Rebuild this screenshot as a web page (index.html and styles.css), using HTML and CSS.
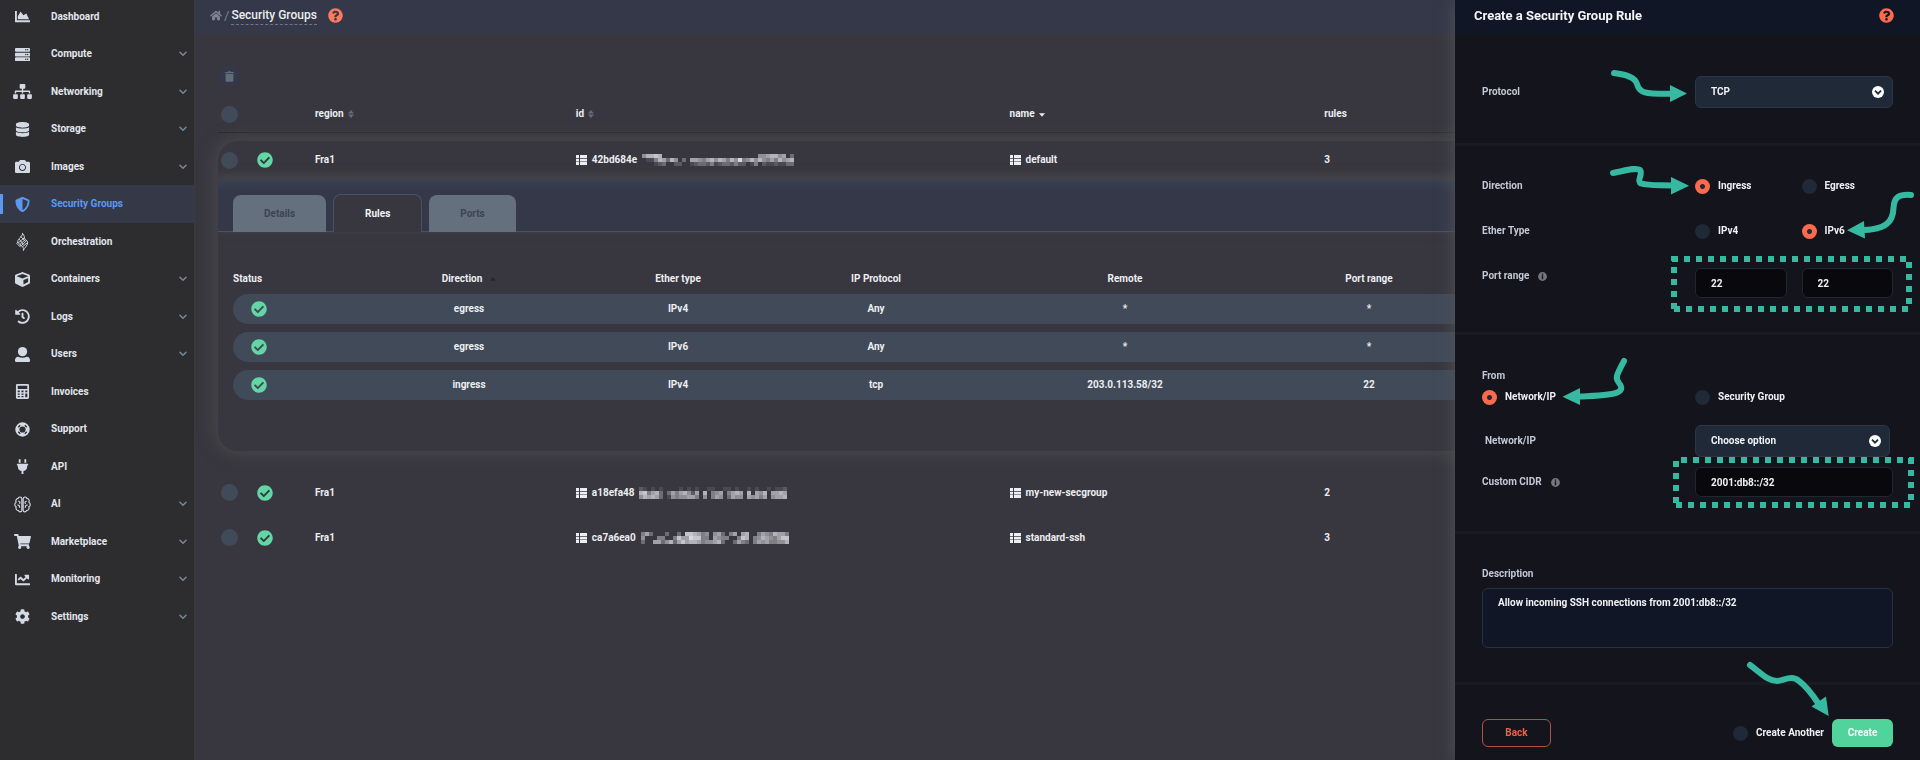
FILE: index.html
```html
<!DOCTYPE html>
<html lang="en">
<head>
<meta charset="utf-8">
<title>Security Groups</title>
<link rel="stylesheet" href="styles.css">
</head>
<body>
<svg class="sprite" aria-hidden="true">
  <symbol id="i-area" viewBox="0 0 512 512"><path d="M500 384c6.600 0 12 5.400 12 12v40c0 6.600-5.400 12-12 12H12c-6.600 0-12-5.400-12-12V76c0-6.600 5.400-12 12-12h40c6.600 0 12 5.400 12 12v308h436zM372.700 159.500L288 216l-85.300-113.700c-5.100-6.800-15.500-6.300-19.900 1L96 248v104h384l-89.900-187.800c-3.200-6.500-11.400-8.700-17.400-4.700z"/></symbol>
  <symbol id="i-server" viewBox="0 0 512 512"><path fill-rule="evenodd" d="M32 32h448a32 32 0 0 1 32 32v64a32 32 0 0 1-32 32H32a32 32 0 0 1-32-32V64a32 32 0 0 1 32-32zM432 72a24 24 0 1 0 0 48 24 24 0 0 0 0-48zM368 72a24 24 0 1 0 0 48 24 24 0 0 0 0-48zM32 192h448a32 32 0 0 1 32 32v64a32 32 0 0 1-32 32H32a32 32 0 0 1-32-32v-64a32 32 0 0 1 32-32zM432 232a24 24 0 1 0 0 48 24 24 0 0 0 0-48zM368 232a24 24 0 1 0 0 48 24 24 0 0 0 0-48zM32 352h448a32 32 0 0 1 32 32v64a32 32 0 0 1-32 32H32a32 32 0 0 1-32-32v-64a32 32 0 0 1 32-32zM432 392a24 24 0 1 0 0 48 24 24 0 0 0 0-48zM368 392a24 24 0 1 0 0 48 24 24 0 0 0 0-48z"/></symbol>
  <symbol id="i-sitemap" viewBox="0 0 640 512"><path d="M128 352H32c-17.670 0-32 14.330-32 32v96c0 17.670 14.330 32 32 32h96c17.670 0 32-14.330 32-32v-96c0-17.670-14.330-32-32-32zm-24-80h192v48h48v-48h192v48h48v-57.590c0-21.170-17.230-38.410-38.410-38.410H344v-64h40c17.670 0 32-14.330 32-32V32c0-17.670-14.330-32-32-32H256c-17.670 0-32 14.330-32 32v96c0 17.670 14.330 32 32 32h40v64H94.410C73.230 224 56 241.230 56 262.410V320h48v-48zm264 80h-96c-17.670 0-32 14.330-32 32v96c0 17.670 14.330 32 32 32h96c17.670 0 32-14.330 32-32v-96c0-17.670-14.330-32-32-32zm240 0h-96c-17.670 0-32 14.330-32 32v96c0 17.670 14.330 32 32 32h96c17.670 0 32-14.330 32-32v-96c0-17.670-14.330-32-32-32z"/></symbol>
  <symbol id="i-database" viewBox="0 0 448 512"><path d="M448 73.143v45.714C448 159.143 347.667 192 224 192S0 159.143 0 118.857V73.143C0 32.857 100.333 0 224 0s224 32.857 224 73.143zM448 176v102.857C448 319.143 347.667 352 224 352S0 319.143 0 278.857V176c48.125 33.143 136.208 48.572 224 48.572S399.874 209.143 448 176zm0 160v102.857C448 479.143 347.667 512 224 512S0 479.143 0 438.857V336c48.125 33.143 136.208 48.572 224 48.572S399.874 369.143 448 336z"/></symbol>
  <symbol id="i-camera" viewBox="0 0 512 512"><path d="M512 144v288c0 26.500-21.500 48-48 48H48c-26.500 0-48-21.500-48-48V144c0-26.500 21.500-48 48-48h88l12.300-32.900c7-18.700 24.900-31.100 44.900-31.100h125.500c20 0 37.900 12.400 44.900 31.100L376 96h88c26.500 0 48 21.500 48 48zM376 288c0-66.200-53.800-120-120-120s-120 53.800-120 120 53.800 120 120 120 120-53.800 120-120zm-32 0c0 48.500-39.500 88-88 88s-88-39.500-88-88 39.500-88 88-88 88 39.500 88 88z"/></symbol>
  <symbol id="i-shield" viewBox="0 0 512 512"><path d="M466.500 83.700l-192-80a48.150 48.150 0 0 0-36.900 0l-192 80C27.700 91.100 16 108.600 16 128c0 198.500 114.500 335.700 221.500 380.300 11.800 4.900 25.100 4.900 36.900 0C360.100 472.600 496 349.300 496 128c0-19.400-11.700-36.900-29.500-44.300zM256.100 446.300l-.1-381 175.900 73.300c-3.300 151.400-82.100 261.100-175.800 307.700z"/></symbol>
  <symbol id="i-flame" viewBox="0 0 14 20"><path fill="none" stroke="currentColor" stroke-width="1" stroke-linejoin="round" d="M7 1C8 4 2 7 2 10M7 1.500C9 4 9 5 9 6L2.500 11.500M9 6C9 9 12 8 12.500 11L7 15.500M5 4.500L10 10M3.500 7.500L8 13M2 10C2 12 5 13 7 15.500 8 16.500 8 18 8 19.500 8 17 12.500 15 12.500 11M10 8L4 13.200M5 13.500L5.500 15M11 9.500L5.500 14.500M2 10.500L1 12 5 16"/></symbol>
  <symbol id="i-cube" viewBox="0 0 512 512"><path d="M239.100 6.300l-208 78c-18.700 7-31.100 25-31.100 45v225.100c0 18.200 10.300 34.800 26.500 42.900l208 104c13.500 6.800 29.400 6.800 42.900 0l208-104c16.300-8.100 26.500-24.800 26.500-42.900V129.300c0-20-12.400-37.900-31.100-44.900l-208-78C262 2.200 250 2.200 239.100 6.300zM256 68.400l192 72v1.100l-192 78-192-78v-1.100l192-72zm32 356V275.500l160-65v133.900l-160 80z"/></symbol>
  <symbol id="i-history" viewBox="0 0 512 512"><path d="M504 255.531c.253 136.640-111.180 248.372-247.820 248.468-59.015.042-113.223-20.530-155.822-54.911-11.077-8.940-11.905-25.541-1.839-35.607l11.267-11.267c8.609-8.609 22.353-9.551 31.891-1.984C173.062 425.135 212.781 440 256 440c101.705 0 184-82.311 184-184 0-101.705-82.311-184-184-184-48.814 0-93.149 18.969-126.068 49.932l50.754 50.754c10.080 10.080 2.941 27.314-11.313 27.314H24c-8.837 0-16-7.163-16-16V38.627c0-14.254 17.234-21.393 27.314-11.314l49.372 49.372C129.209 34.136 189.552 8 256 8c136.810 0 247.747 110.780 248 247.531zm-180.912 78.784l9.823-12.630c8.138-10.463 6.253-25.542-4.210-33.679L288 256.349V152c0-13.255-10.745-24-24-24h-16c-13.255 0-24 10.745-24 24v135.651l65.409 50.874c10.463 8.137 25.541 6.253 33.679-4.210z"/></symbol>
  <symbol id="i-user" viewBox="0 0 512 512"><circle cx="256" cy="158" r="158"/><path d="M110 330c80 50 212 50 292 0 70 4 110 60 110 114v36c0 18-14 32-32 32H32c-18 0-32-14-32-32v-36c0-54 40-110 110-114z"/></symbol>
  <symbol id="i-calc" viewBox="0 0 448 512"><path fill-rule="evenodd" d="M48 0h352a48 48 0 0 1 48 48v416a48 48 0 0 1-48 48H48a48 48 0 0 1-48-48V48A48 48 0 0 1 48 0zM60 60v110h328V60zM60 225v60h70v-60zM189 225v60h70v-60zM318 225v60h70v-60zM60 325v45h70v-45zM189 325v45h70v-45zM60 410v45h70v-45zM189 410v45h70v-45zM318 325v130h70V325z"/></symbol>
  <symbol id="i-ring" viewBox="0 0 16 16"><circle cx="8" cy="8" r="5.500" fill="none" stroke="currentColor" stroke-width="4.400"/><path fill="none" stroke="#2d2d2f" stroke-width="1.500" d="M3.500 5.500l2-2M10.500 3.500l2 2M12.500 10.500l-2 2M5.500 12.500l-2-2"/></symbol>
  <symbol id="i-plug" viewBox="0 0 384 512"><path d="M320 32a32 32 0 0 0-64 0v96h64zm48 128H16A16 16 0 0 0 0 176v32a16 16 0 0 0 16 16h16v32a160.070 160.070 0 0 0 128 156.800V512h64v-99.200A160.070 160.070 0 0 0 352 256v-32h16a16 16 0 0 0 16-16v-32a16 16 0 0 0-16-16zM128 32a32 32 0 0 0-64 0v96h64z"/></symbol>
  <symbol id="i-brain" viewBox="0 0 18 18"><path fill="none" stroke="currentColor" stroke-width="1.200" stroke-linecap="round" stroke-linejoin="round" d="M8.300 3C8.300 1 5 0 4.500 2.500 2 2.500 1.500 5.500 2.300 6.500 .3 8 .3 10.500 2.300 11.500 1.500 13.500 3 15.500 4.800 15.500c.7 2 3.500 1.500 3.500-.5zM9.700 3c0-2 3.300-3 3.800-.5 2.500 0 3 3 2.200 4 2 1.500 2 4 0 5 .8 2-.7 4-2.500 4-.7 2-3.500 1.500-3.500-.5zM5 5.500c1.500.3 1.500 1 1 2.500M4 9.500c1.500 0 2 .8 2 2.500M13 5.500c-1.500.3-1.500 1-1 2.500M14 9.500c-1.500 0-2 .8-2 2.500"/></symbol>
  <symbol id="i-cart" viewBox="0 0 576 512"><path d="M528.120 301.319l47.273-208C578.806 78.301 567.391 64 551.990 64H159.208l-9.166-44.810C147.758 8.021 137.930 0 126.529 0H24C10.745 0 0 10.745 0 24v16c0 13.255 10.745 24 24 24h69.883l70.248 343.435C147.325 417.100 136 435.222 136 456c0 30.928 25.072 56 56 56s56-25.072 56-56c0-15.674-6.447-29.835-16.824-40h209.647C430.447 426.165 424 440.326 424 456c0 30.928 25.072 56 56 56s56-25.072 56-56c0-22.172-12.888-41.332-31.579-50.405l5.517-24.276c3.413-15.018-8.002-29.319-23.403-29.319H218.117l-6.545-32h293.145c11.206 0 20.920-7.754 23.403-18.681z"/></symbol>
  <symbol id="i-line" viewBox="0 0 512 512"><path d="M496 384H64V80c0-8.840-7.160-16-16-16H16C7.160 64 0 71.160 0 80v336c0 17.670 14.330 32 32 32h464c8.840 0 16-7.160 16-16v-32c0-8.840-7.160-16-16-16zM464 96H345.940c-21.380 0-32.090 25.850-16.970 40.970l32.400 32.400L288 242.750l-73.370-73.370c-12.500-12.500-32.760-12.500-45.250 0l-68.690 68.690c-6.250 6.250-6.250 16.380 0 22.630l22.620 22.620c6.250 6.250 16.380 6.250 22.630 0L192 237.250l73.370 73.370c12.500 12.500 32.760 12.500 45.250 0l96-96 32.400 32.400c15.120 15.120 40.970 4.410 40.970-16.970V112c.01-8.840-7.150-16-15.990-16z"/></symbol>
  <symbol id="i-cog" viewBox="0 0 512 512"><path d="M487.400 315.700l-42.600-24.600c4.300-23.200 4.300-47 0-70.200l42.600-24.600c4.900-2.800 7.100-8.600 5.500-14-11.100-35.600-30-67.800-54.700-94.600-3.800-4.100-10-5.100-14.800-2.300L380.800 110c-17.900-15.400-38.500-27.300-60.800-35.100V25.800c0-5.600-3.900-10.500-9.400-11.700-36.700-8.200-74.300-7.800-109.200 0-5.500 1.200-9.400 6.100-9.400 11.700V75c-22.200 7.900-42.800 19.800-60.800 35.100L88.700 85.500c-4.900-2.800-11-1.900-14.800 2.300-24.700 26.700-43.600 58.900-54.700 94.600-1.700 5.400.6 11.200 5.500 14L67.300 221c-4.300 23.200-4.300 47 0 70.200l-42.600 24.600c-4.900 2.800-7.100 8.600-5.500 14 11.100 35.600 30 67.800 54.700 94.600 3.800 4.100 10 5.100 14.800 2.300l42.600-24.600c17.900 15.400 38.500 27.300 60.800 35.100v49.200c0 5.600 3.900 10.500 9.400 11.700 36.700 8.200 74.300 7.800 109.200 0 5.500-1.200 9.400-6.100 9.400-11.700v-49.200c22.200-7.900 42.800-19.800 60.800-35.100l42.600 24.600c4.900 2.800 11 1.900 14.800-2.300 24.700-26.700 43.600-58.900 54.700-94.600 1.500-5.500-.7-11.300-5.600-14.100zM256 336c-44.100 0-80-35.900-80-80s35.900-80 80-80 80 35.900 80 80-35.900 80-80 80z"/></symbol>
  <symbol id="i-home" viewBox="0 0 576 512"><path d="M280.370 148.260L96 300.110V464a16 16 0 0 0 16 16l112.060-.29a16 16 0 0 0 15.920-16V368a16 16 0 0 1 16-16h64a16 16 0 0 1 16 16v95.640a16 16 0 0 0 16 16.050L464 480a16 16 0 0 0 16-16V300L295.670 148.260a12.190 12.190 0 0 0-15.300 0zM571.600 251.470L488 182.560V44.050a12 12 0 0 0-12-12h-56a12 12 0 0 0-12 12v72.610L318.470 43a48 48 0 0 0-61 0L4.340 251.470a12 12 0 0 0-1.600 16.900l25.500 31A12 12 0 0 0 45.150 301l235.220-193.740a12.190 12.190 0 0 1 15.300 0L530.900 301a12 12 0 0 0 16.900-1.600l25.500-31a12 12 0 0 0-1.700-16.930z"/></symbol>
  <symbol id="i-check" viewBox="0 0 512 512"><path d="M504 256c0 136.967-111.033 248-248 248S8 392.967 8 256 119.033 8 256 8s248 111.033 248 248zM227.314 387.314l184-184c6.248-6.248 6.248-16.379 0-22.627l-22.627-22.627c-6.248-6.249-16.379-6.249-22.628 0L216 308.118l-70.059-70.059c-6.248-6.248-16.379-6.248-22.628 0l-22.627 22.627c-6.248 6.248-6.248 16.379 0 22.627l104 104c6.249 6.249 16.379 6.249 22.628.001z"/></symbol>
  <symbol id="i-help" viewBox="0 0 512 512"><path d="M504 256c0 136.997-111.043 248-248 248S8 392.997 8 256C8 119.083 119.043 8 256 8s248 111.083 248 248zM262.655 90c-54.497 0-89.255 22.957-116.549 63.758-3.536 5.286-2.353 12.415 2.715 16.258l34.699 26.310c5.205 3.947 12.621 3.008 16.665-2.122 17.864-22.658 30.113-35.797 57.303-35.797 20.429 0 45.698 13.148 45.698 32.958 0 14.976-12.363 22.667-32.534 33.976C247.128 238.528 216 254.941 216 296v4c0 6.627 5.373 12 12 12h56c6.627 0 12-5.373 12-12v-1.333c0-28.462 83.186-29.647 83.186-106.667 0-58.002-60.165-102-116.531-102zM256 338c-25.365 0-46 20.635-46 46 0 25.364 20.635 46 46 46s46-20.636 46-46c0-25.365-20.635-46-46-46z"/></symbol>
  <symbol id="i-trash" viewBox="0 0 448 512"><path d="M32 464a48 48 0 0 0 48 48h288a48 48 0 0 0 48-48V128H32zM432 32H312l-9.400-18.700A24 24 0 0 0 281.100 0H166.800a23.720 23.720 0 0 0-21.400 13.300L136 32H16A16 16 0 0 0 0 48v32a16 16 0 0 0 16 16h416a16 16 0 0 0 16-16V48a16 16 0 0 0-16-16z"/></symbol>
  <symbol id="i-list" viewBox="0 0 11 10"><path d="M0 0h3v3H0zM4 0h7v3H4zM0 3.700h3v2.700H0zM4 3.700h7v2.700H4zM0 7.100h3v2.900H0zM4 7.100h7v2.900H4z"/></symbol>
  <symbol id="i-chev" viewBox="0 0 8 6"><path fill="none" stroke="currentColor" stroke-width="1.500" stroke-linecap="round" stroke-linejoin="round" d="M1 1.200l3 3 3-3"/></symbol>
  <symbol id="i-down" viewBox="0 0 12 12"><circle cx="6" cy="6" r="6"/><path fill="none" stroke="#1f2937" stroke-width="1.800" d="M3 4.700l3 3 3-3"/></symbol>
  <symbol id="i-info" viewBox="0 0 9 9"><circle cx="4.500" cy="4.500" r="4.400"/><path fill="#14141d" d="M3.800 1.500h1.400v1.200H3.800zM3.800 3.300h1.400v4H3.800z"/></symbol>
  <symbol id="i-sort" viewBox="0 0 6 8"><path d="M0 3.400L3 0l3 3.400zM0 4.600L3 8l3-3.400z"/></symbol>
  <symbol id="i-caret" viewBox="0 0 6 4"><path d="M0 .3h6L3 3.700z"/></symbol>
</svg>

<div class="app">
  <nav class="sidebar" aria-label="Main">
    <a class="nav" href="#"><svg class="ico"><use href="#i-area"/></svg><span>Dashboard</span></a>
    <a class="nav" href="#"><svg class="ico"><use href="#i-server"/></svg><span>Compute</span><svg class="chev"><use href="#i-chev"/></svg></a>
    <a class="nav" href="#"><svg class="ico ico-wide"><use href="#i-sitemap"/></svg><span>Networking</span><svg class="chev"><use href="#i-chev"/></svg></a>
    <a class="nav" href="#"><svg class="ico"><use href="#i-database"/></svg><span>Storage</span><svg class="chev"><use href="#i-chev"/></svg></a>
    <a class="nav" href="#"><svg class="ico"><use href="#i-camera"/></svg><span>Images</span><svg class="chev"><use href="#i-chev"/></svg></a>
    <a class="nav active" href="#" aria-current="page"><svg class="ico"><use href="#i-shield"/></svg><span>Security Groups</span></a>
    <a class="nav" href="#"><svg class="ico ico-tall"><use href="#i-flame"/></svg><span>Orchestration</span></a>
    <a class="nav" href="#"><svg class="ico"><use href="#i-cube"/></svg><span>Containers</span><svg class="chev"><use href="#i-chev"/></svg></a>
    <a class="nav" href="#"><svg class="ico"><use href="#i-history"/></svg><span>Logs</span><svg class="chev"><use href="#i-chev"/></svg></a>
    <a class="nav" href="#"><svg class="ico"><use href="#i-user"/></svg><span>Users</span><svg class="chev"><use href="#i-chev"/></svg></a>
    <a class="nav" href="#"><svg class="ico"><use href="#i-calc"/></svg><span>Invoices</span></a>
    <a class="nav" href="#"><svg class="ico"><use href="#i-ring"/></svg><span>Support</span></a>
    <a class="nav" href="#"><svg class="ico"><use href="#i-plug"/></svg><span>API</span></a>
    <a class="nav" href="#"><svg class="ico ico-wide ico-brain"><use href="#i-brain"/></svg><span>AI</span><svg class="chev"><use href="#i-chev"/></svg></a>
    <a class="nav" href="#"><svg class="ico ico-wide"><use href="#i-cart"/></svg><span>Marketplace</span><svg class="chev"><use href="#i-chev"/></svg></a>
    <a class="nav" href="#"><svg class="ico"><use href="#i-line"/></svg><span>Monitoring</span><svg class="chev"><use href="#i-chev"/></svg></a>
    <a class="nav" href="#"><svg class="ico"><use href="#i-cog"/></svg><span>Settings</span><svg class="chev"><use href="#i-chev"/></svg></a>
  </nav>

  <main class="main">
    <header class="topbar">
      <a class="home" href="#" aria-label="Home"><svg><use href="#i-home"/></svg></a>
      <span class="slash">/</span>
      <a class="crumb" href="#">Security Groups</a>
      <button class="help" type="button" aria-label="Help"><svg><use href="#i-help"/></svg></button>
    </header>

    <div class="content">
      <button class="trash" type="button" aria-label="Delete selected"><svg><use href="#i-trash"/></svg></button>

      <table class="groups">
        <thead>
          <tr>
            <th><input class="tick" type="checkbox" aria-label="Select all"></th>
            <th>region <svg class="sort"><use href="#i-sort"/></svg></th>
            <th>id <svg class="sort"><use href="#i-sort"/></svg></th>
            <th>name <svg class="caret"><use href="#i-caret"/></svg></th>
            <th>rules</th>
          </tr>
        </thead>
        <tbody class="card">
          <tr class="group-row">
            <td><input class="tick" type="checkbox" aria-label="Select default"><svg class="ok"><use href="#i-check"/></svg></td>
            <td>Fra1</td>
            <td><svg class="list"><use href="#i-list"/></svg>42bd684e<svg class="mosaic"></svg></td>
            <td><svg class="list"><use href="#i-list"/></svg>default</td>
            <td>3</td>
          </tr>
          <tr class="detail-row">
            <td>
              <div class="tabs" role="tablist">
                <button class="tab" type="button" role="tab">Details</button>
                <button class="tab tab-on" type="button" role="tab" aria-selected="true">Rules</button>
                <button class="tab" type="button" role="tab">Ports</button>
              </div>
              <table class="rules">
                <thead>
                  <tr><th>Status</th><th>Direction <svg class="caret caret-dark"><use href="#i-caret"/></svg></th><th>Ether type</th><th>IP Protocol</th><th>Remote</th><th>Port range</th></tr>
                </thead>
                <tbody>
                  <tr><td><svg class="ok"><use href="#i-check"/></svg></td><td>egress</td><td>IPv4</td><td>Any</td><td>*</td><td>*</td></tr>
                  <tr><td><svg class="ok"><use href="#i-check"/></svg></td><td>egress</td><td>IPv6</td><td>Any</td><td>*</td><td>*</td></tr>
                  <tr><td><svg class="ok"><use href="#i-check"/></svg></td><td>ingress</td><td>IPv4</td><td>tcp</td><td>203.0.113.58/32</td><td>22</td></tr>
                </tbody>
              </table>
            </td>
          </tr>
        </tbody>
        <tbody class="rest">
          <tr class="group-row">
            <td><input class="tick" type="checkbox" aria-label="Select my-new-secgroup"><svg class="ok"><use href="#i-check"/></svg></td>
            <td>Fra1</td>
            <td><svg class="list"><use href="#i-list"/></svg>a18efa48<svg class="mosaic"></svg></td>
            <td><svg class="list"><use href="#i-list"/></svg>my-new-secgroup</td>
            <td>2</td>
          </tr>
          <tr class="group-row">
            <td><input class="tick" type="checkbox" aria-label="Select standard-ssh"><svg class="ok"><use href="#i-check"/></svg></td>
            <td>Fra1</td>
            <td><svg class="list"><use href="#i-list"/></svg>ca7a6ea0<svg class="mosaic"></svg></td>
            <td><svg class="list"><use href="#i-list"/></svg>standard-ssh</td>
            <td>3</td>
          </tr>
        </tbody>
      </table>
    </div>
  </main>
</div>

<aside class="panel" aria-labelledby="panel-title">
  <header class="panel-head">
    <h2 id="panel-title">Create a Security Group Rule</h2>
    <button class="help" type="button" aria-label="Help"><svg><use href="#i-help"/></svg></button>
  </header>
  <form class="form">
    <section class="block block-protocol">
      <div class="field">
        <label for="protocol">Protocol</label>
        <span class="select"><select id="protocol"><option>TCP</option></select><svg><use href="#i-down"/></svg></span>
      </div>
    </section>

    <section class="block block-direction">
      <div class="field" role="radiogroup" aria-labelledby="dir">
        <span class="label" id="dir">Direction</span>
        <div class="pair">
          <label class="choice"><input type="radio" name="direction" checked>Ingress</label>
          <label class="choice"><input type="radio" name="direction">Egress</label>
        </div>
      </div>
      <div class="field" role="radiogroup" aria-labelledby="eth">
        <span class="label" id="eth">Ether Type</span>
        <div class="pair">
          <label class="choice"><input type="radio" name="ether">IPv4</label>
          <label class="choice"><input type="radio" name="ether" checked>IPv6</label>
        </div>
      </div>
      <div class="field field-top">
        <label for="port-from">Port range <svg class="info"><use href="#i-info"/></svg></label>
        <div class="pair">
          <input class="text" id="port-from" type="text" value="22">
          <input class="text" type="text" value="22" aria-label="Port range end">
        </div>
      </div>
    </section>

    <section class="block block-from">
      <span class="label" id="from">From</span>
      <div class="field from-row" role="radiogroup" aria-labelledby="from">
        <label class="choice"><input type="radio" name="from" checked>Network/IP</label>
        <label class="choice"><input type="radio" name="from">Security Group</label>
      </div>
      <div class="field network">
        <label for="network">Network/IP</label>
        <span class="select"><select id="network"><option>Choose option</option></select><svg><use href="#i-down"/></svg></span>
      </div>
      <div class="field">
        <label for="cidr">Custom CIDR <svg class="info"><use href="#i-info"/></svg></label>
        <input class="text" id="cidr" type="text" value="2001:db8::/32">
      </div>
    </section>

    <section class="block block-description">
      <label for="description">Description</label>
      <textarea id="description">Allow incoming SSH connections from 2001:db8::/32</textarea>
    </section>

    <footer class="actions">
      <button class="btn btn-back" type="button">Back</button>
      <label class="choice another"><input type="checkbox">Create Another</label>
      <button class="btn btn-create" type="submit">Create</button>
    </footer>
  </form>

  <svg class="notes" viewBox="0 0 465 760" aria-hidden="true">
    <g transform="translate(-1455 0)">
      <g class="stroke">
        <path d="M1614 73C1626 74.500 1635 77 1637 84C1639.500 93 1644 94 1671 93.700"/>
        <path d="M1613 173C1624 171 1636 167 1640 170C1643.500 174 1636 181 1641 183.500C1647 185.500 1656 185 1672 185.500"/>
        <path d="M1911 195C1899 194 1894 197 1893.500 208C1893 222 1886 229 1864 230"/>
        <path d="M1624 361C1616 376 1615 378 1619 383C1624 389 1621 393 1608 394.500C1598 396 1590 396 1580 396.500"/>
        <path d="M1750 665C1762 674 1768 681 1777 681C1785 680 1792 675 1799 681C1806 686 1812 694 1818 703"/>
      </g>
      <path class="fill" d="M1670 85L1687 93.500 1670 102zM1671 177L1689 185.700 1671 194.500zM1864 221L1847 230.300 1865 238.500zM1580 388L1562.500 396.700 1580 405zM1811.500 706.500L1828.700 716 1826 696.500z"/>
      <path class="dash" d="M1672 259H1906M1909 262V304M1674 309H1908M1674 309V256M1681 460H1914M1911 458V500M1676 505H1910M1676 461V503"/>
    </g>
  </svg>
</aside>
<script src="app.js"></script>
</body>
</html>
```
FILE: styles.css
```css
* { box-sizing: border-box; }

body {
  margin: 0;
  min-height: 100vh;
  overflow: hidden;
  background: #38373f;
  color: #eceef1;
  font: 700 10px/16px Roboto, sans-serif;
}

button, input, select, textarea { font: inherit; color: inherit; margin: 0; }
button { border: 0; padding: 0; background: none; }
a { color: inherit; text-decoration: none; }
svg { display: block; fill: currentColor; flex: none; }
.sprite { position: absolute; width: 0; height: 0; }

.app { display: flex; min-height: 100vh; }

/* Sidebar */
.sidebar { flex: none; width: 195px; background: #2d2d2f; border-right: 1px solid #3b3b3f; }
.nav { display: flex; align-items: center; height: 37px; padding-right: 7px; color: #e2e6ee; }
.nav:nth-child(even) { height: 38px; }
.nav:first-child { height: 35px; padding-bottom: 2px; }
.nav span { flex: 1; }
.ico { width: 15px; height: 15px; margin: 0 14px 0 15px; color: #d3dae6; }
.ico + span { margin-left: 7px; }
.ico-wide { width: 19px; margin: 0 12px 0 13px; }
.ico-tall { height: 19px; }
.ico-brain { height: 17px; }
.chev { width: 8px; height: 6px; color: #7b8798; }
.active {
  background: #343847;
  color: #5c98f2;
  border: 0 solid;
  border-left-width: 3px;
  border-image: linear-gradient(transparent 25%, #5c98f2 25%, #5c98f2 75%, transparent 75%) 1;
}
.active .ico { margin-left: 12px; color: #5c98f2; }

/* Main area */
.main { flex: 1; min-width: 0; }
.topbar { display: flex; align-items: center; height: 34px; padding: 0 15px 3px; background: #343848; }
.home svg { width: 12px; height: 11px; color: #7b8494; }
.slash { margin: 0 2px; font-size: 13px; font-weight: 400; color: #7b8494; }
.crumb { font-size: 12px; font-weight: 500; line-height: 18px; border-bottom: 1px dashed #6f7787; }
.help { margin-left: 11px; color: #fb7a5e; }
.help svg { width: 15px; height: 15px; }
.content { padding: 31px 23px; }
.trash { display: grid; place-items: center; width: 22px; height: 22px; border-radius: 50%; background: #343848; color: #5f6c7c; }
.trash svg { width: 9px; height: 11px; }

.tick { appearance: none; width: 17px; height: 17px; border-radius: 50%; background: #414a58; }
.ok { width: 16px; height: 16px; color: #63d6a5; }

.groups, .groups > thead, .groups > tbody { display: block; }
.groups th, .groups td { padding: 0; font-weight: 700; text-align: left; }
.groups > thead { padding-top: 9px; border-bottom: 1px solid #29292c; }
.groups > thead > tr, .group-row {
  display: grid;
  grid-template-columns: 97px 261fr 434fr 315fr 573fr;
  align-items: center;
  height: 36px;
}
.groups > thead th, .group-row td { display: flex; align-items: center; }
.groups > thead th:first-child, .group-row td:first-child { padding-left: 3px; gap: 19px; }
.sort { width: 6px; height: 8px; margin-left: 4px; color: #626d7c; }
.caret { width: 6px; height: 4px; margin: 2px 0 0 4px; }
.list { width: 11px; height: 10px; margin-right: 5px; }
.mosaic { height: 12px; margin-left: 5px; }

.card { margin-top: 8px; border-radius: 20px; background: #38373f; box-shadow: 0 0 16px 3px #48484a; overflow: hidden; }
.card .group-row { height: 38px; }
.detail-row, .detail-row > td { display: block; }
.tabs {
  display: flex;
  align-items: flex-end;
  gap: 7px;
  padding: 15px 15px 0;
  background: linear-gradient(#3b4251, #343848 12px);
  box-shadow: inset 0 -1px #4a5261, 0 -3px 9px #48484a;
}
.tab { height: 37px; padding: 0 31px; border-radius: 8px 8px 0 0; background: #65707f; color: #3b444e; }
.tab-on { height: 38px; background: #38373f; border: 1px solid #4a5261; border-bottom: 0; color: #f2f3f5; }

.rules { display: block; padding: 37px 15px 51px; }
.rules thead, .rules tbody { display: block; }
.rules tr { display: grid; grid-template-columns: 134fr 204fr 214fr 182fr 316fr 172fr 427fr; align-items: center; }
.rules thead tr { height: 20px; }
.rules tbody { display: grid; gap: 8px; padding-top: 5px; }
.rules tbody tr { height: 30px; border-radius: 15px; background: #414a58; }
.rules th, .rules td { display: flex; align-items: center; justify-content: center; }
.rules th:first-child { justify-content: flex-start; }
.rules td:first-child { justify-content: flex-start; padding-left: 18px; }
.caret-dark { margin: 0 0 0 8px; color: #27272b; transform: rotate(180deg); }

.rest { padding-top: 23px; }
.rest .group-row { height: 37px; margin-bottom: 8px; }

/* Panel that slides over the page */
.panel {
  position: fixed;
  inset: 0 0 0 auto;
  width: 465px;
  background: #14141d;
  box-shadow: 0 0 16px #55565c;
}
.panel-head { display: flex; align-items: center; justify-content: space-between; height: 34px; padding: 0 26px 3px 19px; background: #101626; }
.panel-head h2 { margin: 0; font-size: 13px; font-weight: 700; color: #f4f5f7; }
.panel-head .help { color: #fb6a4c; }

.block { padding: 0 27px; border-bottom: 3px solid #191a22; }
.block label, .label { color: #c3c9d4; }
.field { display: grid; grid-template-columns: 213px 1fr; align-items: center; }
.field > label, .choice { display: flex; align-items: center; }
.pair { display: grid; grid-template-columns: 1fr 1fr; gap: 15px; }
.block .choice, .choice { gap: 8px; color: #eef0f3; }
.choice input { appearance: none; width: 15px; height: 15px; border-radius: 50%; background: #1f2937; }
.choice input:checked { background: radial-gradient(circle, #1f2937 2px, #fb6a4c 3px); }
.info { width: 9px; height: 9px; margin-left: 9px; color: #77777a; }

.select { position: relative; display: block; }
.select select { appearance: none; width: 100%; height: 32px; padding: 0 15px; border: 1px solid #2b3646; border-radius: 6px; background: #1f2937; color: #f0f1f4; }
.select svg { position: absolute; top: 10px; right: 9px; width: 12px; height: 12px; color: #fff; pointer-events: none; }
.text { width: 100%; min-width: 0; height: 30px; padding: 0 15px; border: 1px solid #1f2733; border-radius: 6px; background: #08080d; color: #f0f1f4; }

.block-protocol { padding-top: 42px; padding-bottom: 35px; }
.block-direction { padding-top: 32px; padding-bottom: 34px; }
.block-direction .field { min-height: 16px; margin-bottom: 29px; }
.block-direction .field-top { align-items: start; margin: 0; }
.block-from { padding-top: 33px; padding-bottom: 34px; }
.block-from .label { display: block; }
.from-row { margin: 5px 0 20px; }
.network { margin-bottom: 10px; }
.network > label { padding-left: 3px; }
.network .select { margin-right: 3px; }
.block-description { padding-top: 32px; padding-bottom: 34px; }
.block-description label { display: block; }
textarea { display: block; width: 100%; height: 60px; margin-top: 6px; padding: 6px 15px; border: 1px solid #263142; border-radius: 6px; background: #101626; color: #f0f1f4; resize: none; }

.actions { display: flex; align-items: center; padding: 34px 27px 0; }
.btn { height: 28px; border-radius: 6px; }
.btn-back { width: 69px; border: 1px solid #b5513f; color: #ee6245; }
.btn-create { width: 61px; margin-left: 8px; background: #52d39c; color: #f2fff9; }
.another { margin-left: auto; }

/* Arrows and dotted frames drawn over the form */
.notes { position: absolute; top: 0; left: 0; width: 465px; height: 760px; pointer-events: none; }
.notes .stroke { fill: none; stroke: #37b9a1; stroke-width: 6; stroke-linecap: round; }
.notes .fill { fill: #37b9a1; }
.notes .dash { fill: none; stroke: #37b9a1; stroke-width: 6; stroke-dasharray: 6 6; }
```
FILE: app.js
```js
// Redacted tail of each id: brightness 0-9 for every 4px cell, three rows per id.
const redacted = [
  ["57787000000000000000000000000556775603",
   "01147637503066546757647594575754647567",
   "00012300220012332412332422014021121133"],
  ["21010100001010100110011010010100101123",
   "78467303646752607045604676070657066763",
   "57676301545566405046503655065646056674"].map(r => r.slice(0, 37)),
  ["46300030030887645056304606700465476644",
   "50004400486698844065440048704576546886",
   "30066357368677645567300364304656445578"].map(r => r.slice(0, 37))
];
const CELL = 4;
document.querySelectorAll(".mosaic").forEach((svg, n) => {
  const rows = redacted[n];
  const w = rows[0].length * CELL;
  svg.setAttribute("viewBox", `0 0 ${w} ${rows.length * CELL}`);
  svg.style.width = w + "px";
  rows.forEach((row, y) => [...row].forEach((c, x) => {
    const r = document.createElementNS("http://www.w3.org/2000/svg", "rect");
    r.setAttribute("x", x * CELL);
    r.setAttribute("y", y * CELL);
    r.setAttribute("width", CELL);
    r.setAttribute("height", CELL);
    r.setAttribute("fill", "#e8e8ee");
    r.setAttribute("fill-opacity", c / 10);
    svg.appendChild(r);
  }));
});
```
